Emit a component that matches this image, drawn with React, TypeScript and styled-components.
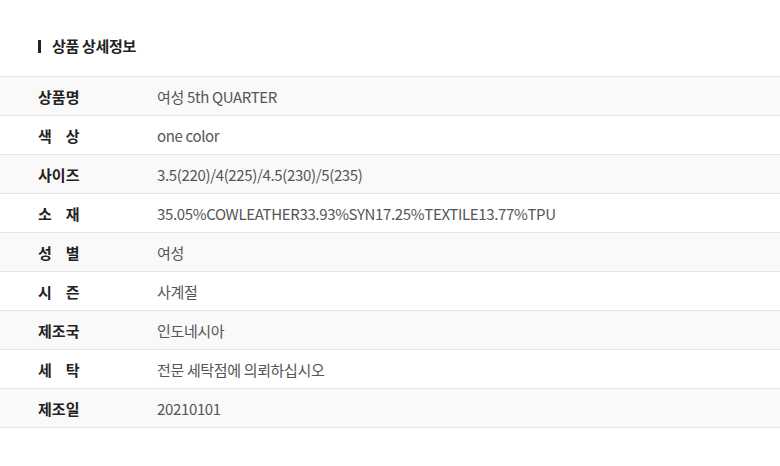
import React from "react";
import styled, { createGlobalStyle } from "styled-components";

const Global = createGlobalStyle`
  html, body { margin: 0; padding: 0; background: #fff; }
  body { font-family: "Noto Sans CJK KR", "Noto Sans", sans-serif; }
`;

const Page = styled.div`
  width: 780px;
  display: flex;
  flex-direction: column;
`;

const Title = styled.h2`
  margin: 0;
  padding: 37px 0 0 38px;
  height: 76px;
  box-sizing: border-box;
  display: flex;
  align-items: flex-start;
  gap: 11px;
  font-size: 15px;
  line-height: 18px;
  font-weight: 700;
  color: #222;
  letter-spacing: -0.3px;
`;

const Bar = styled.span`
  width: 3px;
  height: 13px;
  margin-top: 3px;
  background: #222;
`;

const Table = styled.div`
  border-top: 1px solid #e4e4e4;
  display: flex;
  flex-direction: column;
`;

const Row = styled.div<{ $shaded: boolean }>`
  height: 38px;
  border-bottom: 1px solid #e4e4e4;
  background: ${(p) => (p.$shaded ? "#f9f9f9" : "#fff")};
  display: flex;
  align-items: center;
  font-size: 15px;
`;

const Label = styled.div`
  width: 41px;
  margin-left: 38px;
  margin-right: 78px;
  display: flex;
  justify-content: space-between;
  font-weight: 700;
  color: #222;
  letter-spacing: -0.5px;
  white-space: nowrap;
`;

const Value = styled.div`
  color: #555;
  font-weight: 400;
  letter-spacing: -0.35px;
  white-space: nowrap;
`;

const rows: [string, string][] = [
  ["상품명", "여성 5th QUARTER"],
  ["색상", "one color"],
  ["사이즈", "3.5(220)/4(225)/4.5(230)/5(235)"],
  ["소재", "35.05%COWLEATHER33.93%SYN17.25%TEXTILE13.77%TPU"],
  ["성별", "여성"],
  ["시즌", "사계절"],
  ["제조국", "인도네시아"],
  ["세탁", "전문 세탁점에 의뢰하십시오"],
  ["제조일", "20210101"],
];

export default function App() {
  return (
    <Page>
      <Global />
      <Title>
        <Bar />
        상품 상세정보
      </Title>
      <Table>
        {rows.map(([k, v], i) => (
          <Row key={k} $shaded={i % 2 === 0}>
            <Label>
              {k.split("").map((c, j) => (
                <span key={j}>{c}</span>
              ))}
            </Label>
            <Value>{v}</Value>
          </Row>
        ))}
      </Table>
    </Page>
  );
}
